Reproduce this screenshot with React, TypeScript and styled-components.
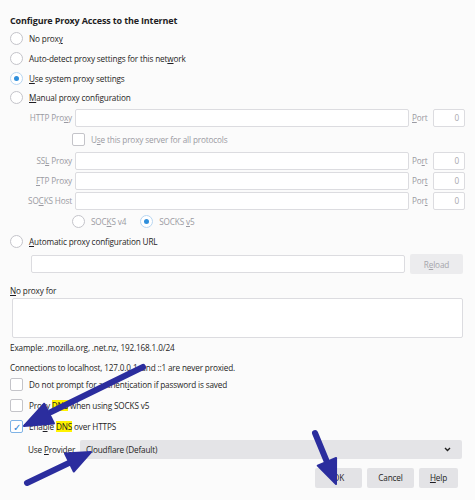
import styled, { createGlobalStyle } from 'styled-components';

const GlobalStyle = createGlobalStyle`
  body {
    margin: 0;
    background: #fbfbfb;
    font-family: "Open Sans", "Liberation Sans", sans-serif;
    font-size: 8.2px;
    letter-spacing: -0.15px;
    color: #1f1e24;
  }
`;

const Page = styled.div`
  position: relative;
  width: 475px;
  height: 500px;
  box-sizing: border-box;
  padding: 13px 12px 0 10px;
  display: flex;
  flex-direction: column;
`;

const Title = styled.div`
  font-weight: 700;
  font-size: 9px;
  line-height: 16px;
`;

interface IRow {
  height: number;
  shift?: number;
}

const Row = styled.div<IRow>`
  display: flex;
  align-items: center;
  gap: 6px;
  height: ${(p) => p.height}px;
  margin-top: ${(p) => p.shift || 0}px;
`;

const Radio = styled.span<{ selected?: boolean }>`
  width: 11px;
  height: 11px;
  border-radius: 50%;
  border: 1px solid ${(p) => (p.selected ? '#b8d6f2' : '#c4c4ca')};
  background: #fff;
  display: inline-flex;
  align-items: center;
  justify-content: center;
  flex: none;

  &::after {
    content: '';
    width: 5px;
    height: 5px;
    border-radius: 50%;
    background: ${(p) => (p.selected ? '#2f8fdc' : 'transparent')};
  }
`;

const Check = styled.span<{ checked?: boolean }>`
  width: 11px;
  height: 11px;
  border-radius: 2px;
  border: 1px solid ${(p) => (p.checked ? '#7fb3e6' : '#c4c4c9')};
  background: #fff;
  display: inline-flex;
  align-items: center;
  justify-content: center;
  flex: none;
  color: #2a7fd4;
  font-size: 10px;
`;

const Key = styled.span`
  text-decoration: underline;
`;

const Mark = styled.span`
  background: #fff200;
`;

const ProxyGrid = styled.div`
  display: grid;
  grid-template-columns: 62px 334px 18px 32px;
  column-gap: 3px;
  align-items: center;
  color: #9a9aa2;
`;

const FieldLabel = styled.div`
  text-align: right;
  height: 20px;
  line-height: 20px;
  white-space: nowrap;
`;

const PortLabel = styled(FieldLabel)`
  text-align: left;
`;

interface IInput {
  height?: number;
}

const Input = styled.div<IInput>`
  box-sizing: border-box;
  height: ${(p) => p.height || 18}px;
  background: #fff;
  border: 1px solid #dcdce0;
  border-radius: 2px;
`;

const PortInput = styled(Input)`
  text-align: right;
  padding-right: 5px;
  line-height: 16px;
  color: #a8a8ae;
`;

const GridSpan = styled.div`
  grid-column: 2 / 5;
  display: flex;
  align-items: center;
  gap: 6px;
  height: 23px;
  margin-left: -3px;
`;

const SocksRow = styled.div`
  grid-column: 2 / 5;
  display: flex;
  align-items: center;
  height: 21px;
  margin-left: -3px;
`;

const SocksOption = styled.span`
  display: inline-flex;
  align-items: center;
  gap: 6px;
  margin-right: 14px;
`;

const UrlRow = styled.div`
  display: flex;
  align-items: center;
  gap: 5px;
  margin: 4px 0 0 21px;
  height: 19px;
`;

const UrlInput = styled(Input)`
  flex: 1;
`;

const GreyButton = styled.div<{ width: number; disabled?: boolean }>`
  box-sizing: border-box;
  width: ${(p) => p.width}px;
  height: 20px;
  flex: none;
  display: flex;
  align-items: center;
  justify-content: center;
  background: ${(p) => (p.disabled ? '#ececee' : '#e3e3e6')};
  color: ${(p) => (p.disabled ? '#a5a5ab' : 'inherit')};
  border-radius: 2px;
`;

const Label = styled.div`
  height: 14px;
  line-height: 14px;
  margin-top: 10px;
`;

const TextArea = styled(Input)`
  margin-left: 2px;
`;

const Note = styled.div`
  height: 20px;
  line-height: 20px;
`;

const ProviderRow = styled.div`
  display: grid;
  grid-template-columns: 52px 1fr;
  align-items: center;
  padding-left: 18px;
  height: 22px;
  margin-top: 1px;
`;

const Select = styled.div`
  height: 19px;
  margin-right: 1px;
  box-sizing: border-box;
  background: #e4e4e7;
  border-radius: 2px;
  display: flex;
  align-items: center;
  justify-content: space-between;
  padding: 0 11px 0 6px;
`;

const ButtonBar = styled.div`
  display: flex;
  justify-content: flex-end;
  gap: 5px;
  margin-top: 7px;
  padding-right: 5px;
`;

const Overlay = styled.svg`
  position: absolute;
  left: 0;
  top: 0;
  pointer-events: none;
`;

const radios = [
  { label: <>No prox<Key>y</Key></>, selected: false },
  { label: <>Auto-detect proxy settings for this net<Key>w</Key>ork</>, selected: false },
  { label: <><Key>U</Key>se system proxy settings</>, selected: true },
  { label: <><Key>M</Key>anual proxy configuration</>, selected: false },
];

const hosts = [
  { label: <>SS<Key>L</Key> Proxy</>, port: <>Po<Key>r</Key>t</> },
  { label: <><Key>F</Key>TP Proxy</>, port: <>Por<Key>t</Key></> },
  { label: <>SO<Key>C</Key>KS Host</>, port: <>Por<Key>t</Key></> },
];

const arrows = [
  { shaft: '143,367 51,412', head: '24,426 54,423.4 44.2,403.7' },
  { shaft: '27,483 71,462', head: '91,452 73.8,471.5 65,453.5' },
  { shaft: '315,433 327,462', head: '336,484 336.1,458 317.7,465.6' },
];

function App() {
  return (
    <Page>
      <GlobalStyle />
      <Title>Configure Proxy Access to the Internet</Title>
      {radios.map((r, i) => (
        <Row key={i} height={19.7}>
          <Radio selected={r.selected} />
          <span>{r.label}</span>
        </Row>
      ))}

      <ProxyGrid>
        <FieldLabel>HTTP Pro<Key>x</Key>y</FieldLabel>
        <Input />
        <PortLabel><Key>P</Key>ort</PortLabel>
        <PortInput>0</PortInput>
        <GridSpan>
          <Check />
          <span>U<Key>s</Key>e this proxy server for all protocols</span>
        </GridSpan>
        {hosts.map((h, i) => (
          <>
            <FieldLabel key={'l' + i}>{h.label}</FieldLabel>
            <Input key={'i' + i} />
            <PortLabel key={'p' + i}>{h.port}</PortLabel>
            <PortInput key={'n' + i}>0</PortInput>
          </>
        ))}
        <SocksRow>
          <SocksOption>
            <Radio />
            <span>SOC<Key>K</Key>S v4</span>
          </SocksOption>
          <SocksOption>
            <Radio selected />
            <span>SOCKS <Key>v</Key>5</span>
          </SocksOption>
        </SocksRow>
      </ProxyGrid>

      <Row height={19}>
        <Radio />
        <span><Key>A</Key>utomatic proxy configuration URL</span>
      </Row>
      <UrlRow>
        <UrlInput />
        <GreyButton width={53} disabled>R<Key>e</Key>load</GreyButton>
      </UrlRow>

      <Label><Key>N</Key>o proxy for</Label>
      <TextArea height={40} />
      <Note>Example: .mozilla.org, .net.nz, 192.168.1.0/24</Note>
      <Note>Connections to localhost, 127.0.0.1, and ::1 are never proxied.</Note>

      <Row height={20} shift={-3}>
        <Check />
        <span>Do not prompt for authent<Key>i</Key>cation if password is saved</span>
      </Row>
      <Row height={21}>
        <Check />
        <span>Prox<Key>y</Key> <Mark>DNS</Mark> when using SOCKS v5</span>
      </Row>
      <Row height={22}>
        <Check checked>✓</Check>
        <span>Ena<Key>b</Key>le <Mark>DNS</Mark> over HTTPS</span>
      </Row>
      <ProviderRow>
        <span>Use <Key>P</Key>rovider</span>
        <Select>
          <span>Cloudflare (Default)</span>
          <svg width="7" height="5" viewBox="0 0 7 5">
            <path d="M1 1 L3.5 3.5 L6 1" fill="none" stroke="#222" strokeWidth="1.4" />
          </svg>
        </Select>
      </ProviderRow>
      <ButtonBar>
        <GreyButton width={47}>OK</GreyButton>
        <GreyButton width={47}>Cancel</GreyButton>
        <GreyButton width={39}><Key>H</Key>elp</GreyButton>
      </ButtonBar>

      <Overlay width="475" height="500" viewBox="0 0 475 500">
        {arrows.map((a, i) => (
          <g key={i} fill="#2b2d9e" stroke="#2b2d9e" strokeLinejoin="round">
            <polyline points={a.shaft} strokeWidth="6" strokeLinecap="round" fill="none" />
            <polygon points={a.head} strokeWidth="2" />
          </g>
        ))}
      </Overlay>
    </Page>
  );
}

export default App;
